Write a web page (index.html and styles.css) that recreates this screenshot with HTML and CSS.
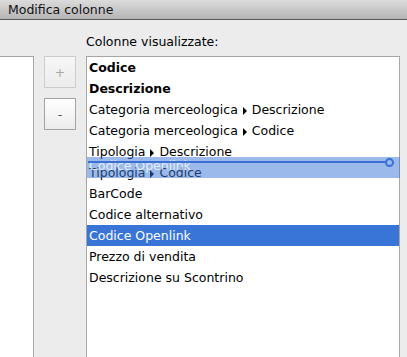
FILE: index.html
```html
<!DOCTYPE html>
<html>
<head>
<meta charset="utf-8">
<link rel="stylesheet" href="styles.css">
</head>
<body>
<div class="titlebar">Modifica colonne</div>
<div class="content">
  <div class="heading">Colonne visualizzate:</div>
  <div class="leftpanel"></div>
  <div class="buttons">
    <div class="btn btn-disabled">+</div>
    <div class="btn btn-minus">-</div>
  </div>
  <div class="list">
    <div class="row bold">Codice</div>
    <div class="row bold">Descrizione</div>
    <div class="row">Categoria merceologica <span class="tri"></span> Descrizione</div>
    <div class="row">Categoria merceologica <span class="tri"></span> Codice</div>
    <div class="row">Tipologia <span class="tri"></span> Descrizione</div>
    <div class="row">Tipologia <span class="tri"></span> Codice</div>
    <div class="row">BarCode</div>
    <div class="row">Codice alternativo</div>
    <div class="row selected">Codice Openlink</div>
    <div class="row">Prezzo di vendita</div>
    <div class="row">Descrizione su Scontrino</div>
    <div class="dragimg">Codice Openlink</div>
    <div class="dropline"><span class="dropcircle"></span></div>
  </div>
</div>
</body>
</html>
```
FILE: styles.css
```css
html, body {
  margin: 0;
  padding: 0;
  background: #ececec;
  overflow: hidden;
  height: 357px;
  font-family: "DejaVu Sans", sans-serif;
  font-size: 12.5px;
  color: #000;
}
.titlebar {
  height: 19px;
  line-height: 19px;
  padding-left: 8px;
  background: linear-gradient(#dcdcdc, #b4b4b4);
  border-bottom: 1px solid #5a5a5a;
  color: #111;
}
.content {
  display: grid;
  grid-template-columns: 34px 32px 314px;
  grid-template-rows: 36px 301px;
  column-gap: 10px;
}
.heading {
  grid-column: 3;
  grid-row: 1;
  padding-top: 14px;
  line-height: 15px;
}
.leftpanel {
  grid-column: 1;
  grid-row: 2;
  background: #fff;
  border-top: 1px solid #a6a6a6;
  border-right: 1px solid #a6a6a6;
}
.buttons {
  grid-column: 2;
  grid-row: 2;
  display: flex;
  flex-direction: column;
  gap: 10px;
}
.btn {
  box-sizing: border-box;
  height: 32px;
  border: 1px solid #a2a2a2;
  background: linear-gradient(#ffffff, #ececec);
  display: flex;
  align-items: center;
  justify-content: center;
  color: #555;
}
.btn-disabled {
  border-color: #cdcdcd;
  background: linear-gradient(#f6f6f6, #ececec);
  color: #a8a8a8;
}
.list {
  grid-column: 3;
  grid-row: 2;
  position: relative;
  background: #fff;
  border: 1px solid #a6a6a6;
  border-bottom: none;
}
.row {
  height: 21px;
  line-height: 21px;
  padding-left: 2px;
  white-space: nowrap;
}
.bold { font-weight: bold; }
.selected {
  background: #3875d7;
  color: #fff;
}
.tri {
  display: inline-block;
  width: 0;
  height: 0;
  border-top: 4px solid transparent;
  border-bottom: 4px solid transparent;
  border-left: 4px solid #000;
  margin: 0 1px;
  vertical-align: -1px;
}
.dragimg {
  position: absolute;
  left: 0;
  top: 100px;
  width: 313px;
  height: 21px;
  line-height: 17px;
  padding-left: 2px;
  box-sizing: border-box;
  background: rgba(56, 117, 215, 0.5);
  color: rgba(255, 255, 255, 0.75);
}
.dropline {
  position: absolute;
  left: 1px;
  top: 104px;
  width: 299px;
  height: 2px;
  background: #3a70d6;
}
.dropcircle {
  position: absolute;
  right: -7px;
  top: -3px;
  width: 5px;
  height: 5px;
  border: 2px solid #3a70d6;
  border-radius: 50%;
}
```
